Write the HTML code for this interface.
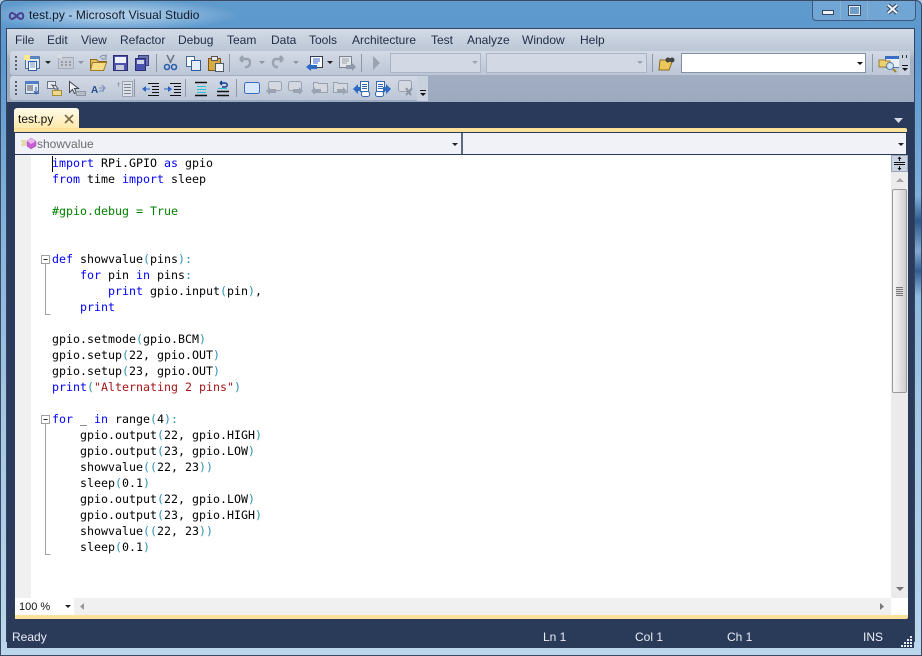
<!DOCTYPE html>
<html><head><meta charset="utf-8"><style>
html,body{margin:0;padding:0;width:922px;height:656px;overflow:hidden;background:#a9cbe8}
*{box-sizing:border-box}
.a{position:absolute}
#win{position:relative;width:922px;height:656px;overflow:hidden;font-family:"Liberation Sans",sans-serif;
background:linear-gradient(180deg,#5f9acc 0,#5b98d0 60px,#7fb0d9 200px,#a6c8e4 420px,#bcd7ec 656px);border:1px solid #3a4a62;border-radius:6px 6px 0 0}
.m{position:absolute;top:32px;font-size:12px;line-height:14px;color:#1f2c45}
#code{position:absolute;left:30px;top:154px;width:861px;height:443px;font:11.63px/16px "DejaVu Sans Mono",monospace;color:#000;white-space:pre;padding-left:21px}
.k{color:#0000ff}.c{color:#008000}.p{color:#2b91af}.s{color:#a31515}
.st{position:absolute;top:629px;font-size:12px;line-height:14px;color:#e8edf5}
</style></head><body><div id="win">
<div class="a" style="left:-1px;top:-1px;width:640px;height:30px;background:radial-gradient(ellipse 130px 16px at 110px 15px,rgba(220,235,248,.75),rgba(220,235,248,0) 100%)"></div>
<div class="a" style="left:914px;top:195px;width:8px;height:100px;background:linear-gradient(180deg,rgba(30,70,125,0),rgba(30,70,125,.85) 25%,rgba(130,165,205,.7) 55%,rgba(30,70,125,.8) 75%,rgba(30,70,125,0))"></div>
<div class="a" style="left:28px;top:7px;font-size:12px;line-height:15px;color:#101a2b;letter-spacing:.08px">test.py - Microsoft Visual Studio</div>
<svg class="a" style="left:7px;top:10px" width="18" height="10"><path d="M4 2C1 2 1 8 4 8C7 8 10 2 13 2C16 2 16 8 13 8C10 8 7 2 4 2Z" fill="none" stroke="#4b3f8f" stroke-width="2"/></svg>

<div class="a" style="left:811px;top:-1px;width:104px;height:21px;border:1px solid #3e5a7e;border-top:0;border-radius:0 0 4px 4px;background:rgba(150,190,225,.35)"></div>
<div class="a" style="left:839px;top:-1px;width:1px;height:20px;background:#8fb0cf"></div>
<div class="a" style="left:866px;top:-1px;width:1px;height:20px;background:#8fb0cf"></div>
<div class="a" style="left:821px;top:9px;width:12px;height:5px;background:#eef3f8;border:1px solid #33475f"></div>
<div class="a" style="left:847px;top:4px;width:13px;height:11px;background:#6f9dc8;border:2px solid #e8eef5;outline:1px solid #33475f;outline-offset:-1px"></div>
<svg class="a" style="left:885px;top:2px" width="13" height="12"><path d="M2 2L11 10M11 2L2 10" stroke="#33475f" stroke-width="4"/><path d="M2 2L11 10M11 2L2 10" stroke="#f0f4f8" stroke-width="2"/></svg>

<div class="a" style="left:5px;top:27px;width:909px;height:614px;background:#2a3a59;border:1px solid #34465f;border-bottom:0"></div>
<div class="a" style="left:6px;top:28px;width:907px;height:73px;background:linear-gradient(180deg,#d2dae6 0,#bcc7d6 22px,#a4b1c5 30px,#9ca9be 73px)"></div>
<div class="m" style="left:14px">File</div><div class="m" style="left:46px">Edit</div><div class="m" style="left:80px">View</div><div class="m" style="left:119px">Refactor</div><div class="m" style="left:177px">Debug</div><div class="m" style="left:226px">Team</div><div class="m" style="left:270px">Data</div><div class="m" style="left:308px">Tools</div><div class="m" style="left:351px">Architecture</div><div class="m" style="left:430px">Test</div><div class="m" style="left:466px">Analyze</div><div class="m" style="left:521px">Window</div><div class="m" style="left:579px">Help</div>

<div class="a" style="left:9px;top:50px;width:900px;height:24px;background:linear-gradient(180deg,#d3dae5,#bcc6d6);border-radius:3px"></div>
<div class="a" style="left:9px;top:75px;width:418px;height:24px;background:linear-gradient(180deg,#d3dae5,#bcc6d6);border-radius:3px"></div>
<div class="a" style="left:389px;top:52px;width:91px;height:20px;background:#d2d9e5;border:1px solid #aab4c4"></div>
<div class="a" style="left:485px;top:52px;width:161px;height:20px;background:#d2d9e5;border:1px solid #aab4c4"></div>
<div class="a" style="left:680px;top:52px;width:185px;height:20px;background:#fff;border:1px solid #8391a6"></div>

<svg class="a" style="left:-1px;top:-1px" width="922" height="656">
<g fill="#55606f"><path d="M15 56h2v2h-2zM15 60h2v2h-2zM15 64h2v2h-2zM15 68h2v2h-2zM15 81h2v2h-2zM15 85h2v2h-2zM15 89h2v2h-2zM15 93h2v2h-2z"/></g>
<g fill="#8d99ab"><path d="M156 54h1v18h-1zM229 54h1v18h-1zM361 54h1v18h-1zM652 54h1v18h-1zM872 54h1v18h-1zM134 79h1v18h-1zM185 79h1v18h-1zM236 79h1v18h-1z"/></g>
<!-- toolbar 1 -->
<rect x="25.500" y="56.500" width="14" height="12" fill="#dfe9f5" stroke="#5a6f8f"/><rect x="25" y="56" width="15" height="3" fill="#5b84bd"/><rect x="28.500" y="61.500" width="8" height="9" fill="#fff" stroke="#2a5fa8"/><path d="M30 63h5M30 65h5M30 67h5" stroke="#6f8fb8"/><path d="M24 55h6v5h-6z" fill="#fbe98a"/>
<path d="M45 61h6l-3 3z" fill="#222"/>
<rect x="58.500" y="57.500" width="15" height="11" fill="#c5ccd6" stroke="#a3acb9"/><path d="M61 61h2v2h-2zM65 61h2v2h-2zM69 61h2v2h-2zM61 64h2v2h-2zM65 64h2v2h-2zM69 64h2v2h-2z" fill="#969eab"/><path d="M57 54h5v4h-5z" fill="#d7dce3"/>
<path d="M78 61h6l-3 3z" fill="#8c95a3"/>
<path d="M90.500 59.500h6l2 2h8l-3 9h-13z" fill="#e6bf55" stroke="#8d6a20"/><path d="M92.500 62.500h14l-3 8h-13z" fill="#f7dc86" stroke="#a07c2c"/><path d="M100 58c1-3 4-3 5-2l1-1v4h-4l1-1" fill="none" stroke="#7d8ea5"/>
<rect x="113.500" y="55.500" width="14" height="15" fill="#4b53ad" stroke="#2b2f72"/><rect x="115" y="57" width="11" height="6" fill="#eef1fa"/><rect x="116" y="65" width="8" height="5" fill="#c8cbd8"/>
<rect x="138.500" y="55.500" width="10" height="10" fill="#6b72b5" stroke="#3a3f7e"/><rect x="135.500" y="58.500" width="10" height="12" fill="#4b53ad" stroke="#2b2f72"/><rect x="137" y="60" width="7" height="4" fill="#cfd3ea"/>
<path d="M167 55l4 8M174 55l-4 8" stroke="#6a7587" stroke-width="1.5"/><circle cx="167" cy="67" r="2.500" fill="none" stroke="#2b5fae" stroke-width="1.6"/><circle cx="174" cy="67" r="2.500" fill="none" stroke="#2b5fae" stroke-width="1.6"/>
<rect x="186.500" y="56.500" width="8" height="10" fill="#fff" stroke="#41699e"/><rect x="191.500" y="60.500" width="9" height="10" fill="#e4edf8" stroke="#2f5e9e"/>
<rect x="208.500" y="58.500" width="12" height="12" fill="#d7a93e" stroke="#75591d"/><rect x="211.500" y="56.500" width="6" height="4" fill="#e8e8e8" stroke="#555"/><rect x="215.500" y="63.500" width="8" height="8" fill="#f0f2f6" stroke="#4f5d72"/>
<path d="M240 59h7c4 0 4 7 0 8h-2M240 59l3-3M240 59l3 3" fill="none" stroke="#98a2b1" stroke-width="2.400"/>
<path d="M259 61h6l-3 3zM293 61h6l-3 3z" fill="#8c95a3"/>
<path d="M283 59h-7c-4 0-4 7 0 8h2M283 59l-3-3M283 59l-3 3" fill="none" stroke="#98a2b1" stroke-width="2.400"/>
<rect x="310.500" y="56.500" width="12" height="11" fill="#fff" stroke="#333c4d"/><path d="M313 59h7M313 61h7M313 63h5" stroke="#2b63d0"/><path d="M306 67l5-4v2h6v4h-6v2z" fill="#2d6bc4"/>
<path d="M327 61h6l-3 3z" fill="#222"/>
<rect x="339.500" y="56.500" width="12" height="11" fill="#e3e6ea" stroke="#7a8594"/><path d="M342 59h7M342 61h7M342 63h5" stroke="#9aa3af"/><path d="M346 65h6v-2l4 4-4 4v-2h-6z" fill="#8f99a8"/>
<path d="M373 56l7 7-7 7z" fill="#99a3b2"/>
<path d="M472 61h6l-3 3zM637 61h6l-3 3z" fill="#9aa4b3"/>
<path d="M660 60h10l2 2-3 8h-10z" fill="#edc75a" stroke="#8d6a20"/><circle cx="668" cy="60" r="2.500" fill="#444"/><circle cx="672" cy="60" r="2.500" fill="#444"/>
<path d="M857 62h6l-3 3z" fill="#111"/>
<rect x="885.500" y="56.500" width="15" height="11" fill="#eaf0f8" stroke="#4a76b5"/><rect x="885" y="56" width="16" height="3" fill="#3a6ec4"/><path d="M879 60h6l1 1h4v6h-11z" fill="#efd070" stroke="#9a7c34"/><circle cx="890" cy="66" r="3.500" fill="#cfe6f8" stroke="#5d7fa6"/><path d="M893 69l3 3" stroke="#a5822c" stroke-width="2"/>
<rect x="899" y="51" width="11" height="24" fill="#c9d1de"/><path d="M902 55h1v3h-1zM906 55h1v3h-1z" fill="#333"/><rect x="902" y="65" width="6" height="1" fill="#111"/><path d="M902 68h6l-3 3z" fill="#111"/>
<!-- toolbar 2 -->
<rect x="25.500" y="81.500" width="13" height="12" fill="#dbe6f4" stroke="#5a6f8f"/><rect x="25" y="81" width="14" height="3" fill="#4f7ec4"/><path d="M27 86h6M27 88h6M27 90h6" stroke="#555"/><path d="M36 87v6M34 91l2 3 2-3" stroke="#2b5fae" fill="none"/>
<rect x="47.500" y="81.500" width="8" height="7" fill="#e9ebef" stroke="#6b7585"/><path d="M52 85l4 1 2 3-3 0z" fill="#fff" stroke="#4a5464"/><rect x="52.500" y="90.500" width="9" height="5" fill="#f0d88a" stroke="#a68f3a"/>
<path d="M69.500 81.500v11l3-3 2 4 2-1-2-4h4z" fill="#eef0f3" stroke="#3f4753"/><rect x="76.500" y="91.500" width="9" height="4" fill="#b6bdc9" stroke="#8c95a3"/>
<text x="91" y="93" font-family="Liberation Sans" font-weight="bold" font-size="10" fill="#234d8f">A</text><path d="M99 88h5M99 91h5M102 85l3 3-3 3" stroke="#6f8fbf" fill="none"/>
<path d="M117 84h3M118.500 82v5" stroke="#9aa3af"/><rect x="122.500" y="81.500" width="10" height="15" fill="#dfe3e9" stroke="#9ba4b1"/><path d="M124 84.500h7M124 87.500h7M124 90.500h7M124 93.500h7" stroke="#7a8492"/>
<path d="M148 83.500h11M152 86.500h7M152 89.500h7M152 92.500h7M148 95.500h11" stroke="#111"/><path d="M142 89l4-3v6z" fill="#2b63c4"/><path d="M146 89h4" stroke="#2b63c4"/>
<path d="M170 83.500h11M174 86.500h7M174 89.500h7M174 92.500h7M170 95.500h11" stroke="#111"/><path d="M172 89l-4-3v6z" fill="#2b63c4"/><path d="M164 89h5" stroke="#2b63c4"/>
<path d="M195 82.500h12M195 95.500h12" stroke="#111" stroke-width="1.400"/><path d="M197 86.500h9M197 89.500h9M197 92.500h9" stroke="#28c4d6"/>
<path d="M217 91.500h12M217 95.500h12" stroke="#111" stroke-width="1.400"/><path d="M218 88.500h9" stroke="#28c4d6"/><path d="M220 83h5c3 0 3 4 0 4h-3M220 83l2-2M220 83l2 2" fill="none" stroke="#123a8f" stroke-width="1.400"/>
<rect x="244.500" y="82.500" width="15" height="11" rx="2" fill="#d8e6fa" stroke="#3d6fc0"/>
<g fill="#d4d9e1" stroke="#98a2b1"><rect x="268.500" y="81.500" width="13" height="9" rx="2"/><rect x="288.500" y="81.500" width="13" height="9" rx="2"/><path d="M313.500 82.500h4l1 1h9v9h-14z"/><path d="M333.500 82.500h4l1 1h9v9h-14z"/><rect x="398.500" y="80.500" width="13" height="11" rx="2"/></g>
<g fill="#99a3b2"><path d="M266 91l4-4v2h6v4h-6v2zM311 91l4-4v2h6v4h-6v2z"/><path d="M303 91l-4-4v2h-6v4h6v2zM347 91l-4-4v2h-6v4h6v2z"/></g>
<path d="M406 88l5 7M412 88l-6 7" stroke="#8d96a4" stroke-width="2"/>
<rect x="360.500" y="81.500" width="8" height="10" fill="#fff" stroke="#3566b0"/><path d="M362 84.500h5M362 86.500h5M362 88.500h5" stroke="#3566b0"/><rect x="361.500" y="91.500" width="8" height="5" rx="2" fill="#fff" stroke="#3566b0"/><path d="M353 89l5-5v3h3v4h-3v3z" fill="#2d6bc4"/>
<rect x="376.500" y="81.500" width="8" height="10" fill="#fff" stroke="#3566b0"/><path d="M378 84.500h5M378 86.500h5M378 88.500h5" stroke="#3566b0"/><rect x="375.500" y="91.500" width="8" height="5" rx="2" fill="#fff" stroke="#3566b0"/><path d="M391 89l-5-5v3h-3v4h3v3z" fill="#2d6bc4"/>
<rect x="417" y="76" width="11" height="25" fill="#c9d1de"/><rect x="420" y="90" width="6" height="1" fill="#111"/><path d="M420 93h6l-3 3z" fill="#111"/>
</svg>

<div class="a" style="left:6px;top:101px;width:907px;height:540px;background:#2a3a59;background-image:repeating-conic-gradient(#2d3d5f 0 25%,#283756 0 50%);background-size:3px 3px"></div>
<div class="a" style="left:13px;top:107px;width:65px;height:21px;background:linear-gradient(180deg,#fffbea,#ffe9a8);border-radius:3px 3px 0 0"></div>
<div class="a" style="left:17px;top:111px;font-size:12px;line-height:14px;color:#111">test.py</div>
<svg class="a" style="left:63px;top:113px" width="11" height="10"><path d="M1 1L9 9M9 1L1 9" stroke="#7a6a48" stroke-width="1.600"/></svg>
<svg class="a" style="left:893px;top:117px" width="10" height="6"><path d="M0 0h9l-4.500 5z" fill="#d5dbe6"/></svg>
<div class="a" style="left:13px;top:127px;width:893px;height:4px;background:#ffe29a;border-radius:0 2px 0 0"></div>
<div class="a" style="left:14px;top:132px;width:447px;height:21px;background:#f0f2f8"></div>
<div class="a" style="left:460px;top:132px;width:445px;height:21px;background:#f0f2f8;border-left:2px solid #5c6b82"></div>
<svg class="a" style="left:19px;top:135px" width="18" height="14"><path d="M1 5h5M2 7h4M1 9h5" stroke="#d6c55c"/><path d="M11 2l5 3v5l-5 3-4-3V5z" fill="#c85fd0" stroke="#a04bb0" stroke-width=".5"/><path d="M11 2l5 3-5 3-4-3z" fill="#eab6ee"/></svg>
<div class="a" style="left:36px;top:136px;font-size:12px;line-height:15px;color:#6d6d6d">showvalue</div>
<svg class="a" style="left:451px;top:142px" width="8" height="5"><path d="M0 0h6l-3 3z" fill="#222"/></svg>
<svg class="a" style="left:897px;top:142px" width="8" height="5"><path d="M0 0h6l-3 3z" fill="#222"/></svg>

<div class="a" style="left:14px;top:154px;width:876px;height:443px;background:#fff"></div>
<div class="a" style="left:14px;top:154px;width:16px;height:443px;background:#f0f0f0"></div>
<div id="code"><span class="k">import</span> RPi.GPIO <span class="k">as</span> gpio
<span class="k">from</span> time <span class="k">import</span> sleep

<span class="c">#gpio.debug = True</span>


<span class="k">def</span> showvalue<span class="p">(</span>pins<span class="p">):</span>
    <span class="k">for</span> pin <span class="k">in</span> pins<span class="p">:</span>
        <span class="k">print</span> gpio.input<span class="p">(</span>pin<span class="p">)</span>,
    <span class="k">print</span>

gpio.setmode<span class="p">(</span>gpio.BCM<span class="p">)</span>
gpio.setup<span class="p">(</span>22, gpio.OUT<span class="p">)</span>
gpio.setup<span class="p">(</span>23, gpio.OUT<span class="p">)</span>
<span class="k">print</span><span class="p">(</span><span class="s">"Alternating 2 pins"</span><span class="p">)</span>

<span class="k">for</span> _ <span class="k">in</span> range<span class="p">(</span>4<span class="p">):</span>
    gpio.output<span class="p">(</span>22, gpio.HIGH<span class="p">)</span>
    gpio.output<span class="p">(</span>23, gpio.LOW<span class="p">)</span>
    showvalue<span class="p">((</span>22, 23<span class="p">))</span>
    sleep<span class="p">(</span>0.1<span class="p">)</span>
    gpio.output<span class="p">(</span>22, gpio.LOW<span class="p">)</span>
    gpio.output<span class="p">(</span>23, gpio.HIGH<span class="p">)</span>
    showvalue<span class="p">((</span>22, 23<span class="p">))</span>
    sleep<span class="p">(</span>0.1<span class="p">)</span></div>
<div class="a" style="left:51px;top:155px;width:1px;height:16px;background:#000"></div>
<svg class="a" style="left:39px;top:250px" width="14" height="310"><g fill="none" stroke="#a0a0a0"><rect x="1.500" y="4.500" width="8" height="8" fill="#fff"/><path d="M5.500 12.500V63.500H10.500"/><rect x="1.500" y="164.500" width="8" height="8" fill="#fff"/><path d="M5.500 172.500V303.500H10.500"/></g><path d="M3.500 8.500h4M3.500 168.500h4" stroke="#222"/></svg>

<div class="a" style="left:890px;top:154px;width:17px;height:443px;background:#ebebeb"></div>
<div class="a" style="left:890px;top:154px;width:17px;height:17px;background:#c9d3e2;border:1px solid #9aa6b8"></div>
<svg class="a" style="left:892px;top:154px" width="14" height="17"><path d="M1 7.500h11M1 9.500h11M6.500 2v4M6.500 11v4" stroke="#111"/><path d="M4.500 4l2-2.500 2 2.500zM4.500 13l2 2.500 2-2.500z" fill="#111"/></svg>
<svg class="a" style="left:895px;top:177px" width="9" height="6"><path d="M4 0l4 4H0z" fill="#a5a5a5"/></svg>
<div class="a" style="left:891px;top:188px;width:15px;height:204px;background:linear-gradient(90deg,#f6f6f6,#e8e8e8 40%,#cdcdcd);border:1px solid #9a9a9a;border-radius:2px"></div>
<div class="a" style="left:895px;top:286px;width:7px;height:9px;background:repeating-linear-gradient(180deg,#777 0 1px,#ddd 1px 2px)"></div>
<svg class="a" style="left:895px;top:586px" width="9" height="6"><path d="M0 0h8L4 4z" fill="#777"/></svg>

<div class="a" style="left:14px;top:597px;width:876px;height:18px;background:#f0f0f0"></div>
<div class="a" style="left:14px;top:597px;width:59px;height:18px;background:#fff"></div>
<div class="a" style="left:18px;top:599px;font-size:11px;line-height:14px;color:#111">100 %</div>
<svg class="a" style="left:64px;top:604px" width="8" height="5"><path d="M0 0h6l-3 3z" fill="#222"/></svg>
<svg class="a" style="left:79px;top:602px" width="6" height="9"><path d="M4 0v7L0 3.500z" fill="#999"/></svg>
<svg class="a" style="left:879px;top:602px" width="6" height="9"><path d="M0 0v7l4-3.500z" fill="#777"/></svg>
<div class="a" style="left:890px;top:597px;width:17px;height:18px;background:#fff"></div>
<div class="a" style="left:14px;top:614px;width:893px;height:4px;background:#ffe29a;border-radius:0 0 2px 0"></div>
<div class="a" style="left:6px;top:622px;width:907px;height:25px;background:#2a3a59"></div>
<div class="st" style="left:11px">Ready</div><div class="st" style="left:542px">Ln 1</div><div class="st" style="left:634px">Col 1</div><div class="st" style="left:726px">Ch 1</div><div class="st" style="left:862px">INS</div>
<svg class="a" style="left:899px;top:634px" width="13" height="13"><path d="M10 1h2v2h-2zM7 4h2v2H7zM10 4h2v2h-2zM4 7h2v2H4zM7 7h2v2H7zM10 7h2v2h-2zM1 10h2v2H1zM4 10h2v2H4zM7 10h2v2H7zM10 10h2v2h-2z" fill="#e8edf5"/></svg>
</div></body></html>
